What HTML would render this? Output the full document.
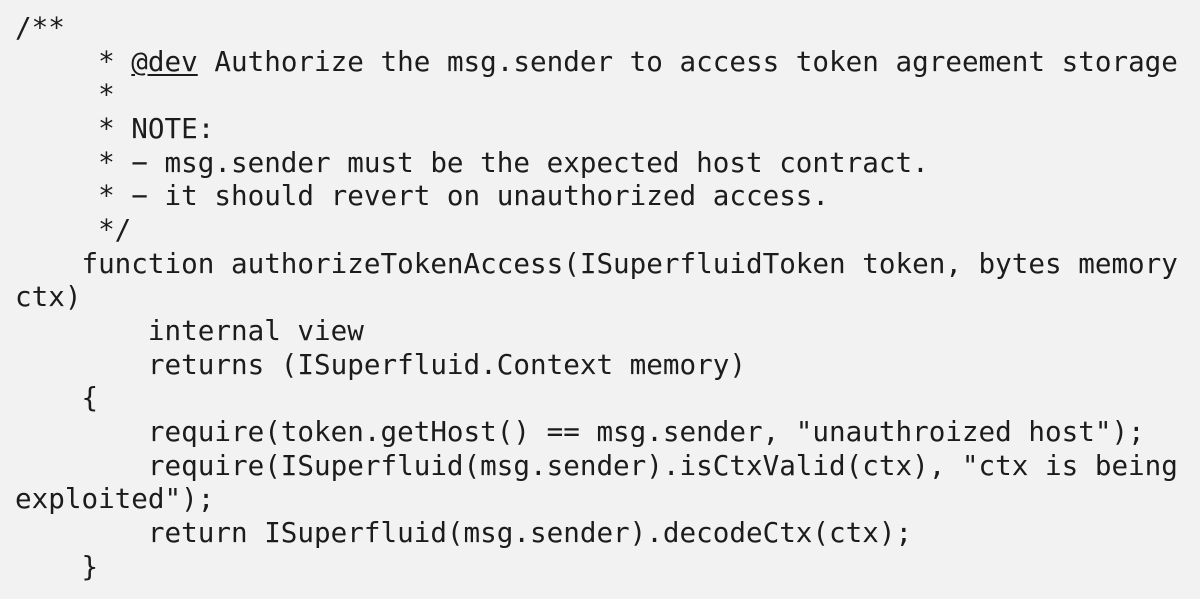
<!DOCTYPE html>
<html><head><meta charset="utf-8"><style>
html,body{margin:0;padding:0;background:#f2f2f2;width:1200px;height:599px;overflow:hidden}
pre{margin:0;padding:11px 0 0 15px;font-family:"DejaVu Sans Mono","Liberation Mono",monospace;font-size:27.6px;line-height:33.65px;color:#1c1c1c;white-space:pre}
u{text-decoration-thickness:2px;text-underline-offset:3px}
</style></head><body><pre>/**
     * <u>@dev</u> Authorize the msg.sender to access token agreement storage
     *
     * NOTE:
     * − msg.sender must be the expected host contract.
     * − it should revert on unauthorized access.
     */
    function authorizeTokenAccess(ISuperfluidToken token, bytes memory
ctx)
        internal view
        returns (ISuperfluid.Context memory)
    {
        require(token.getHost() == msg.sender, "unauthroized host");
        require(ISuperfluid(msg.sender).isCtxValid(ctx), "ctx is being
exploited");
        return ISuperfluid(msg.sender).decodeCtx(ctx);
    }</pre></body></html>
